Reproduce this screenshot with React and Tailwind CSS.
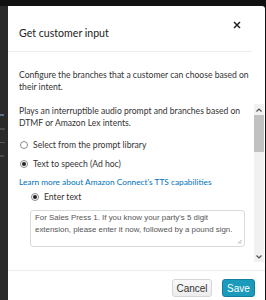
import React from 'react';

function Radio({ checked }) {
  return (
    <span className="w-[8px] h-[8px] rounded-full border border-[#8a8a8a] bg-white flex items-center justify-center shrink-0">
      {checked && <span className="w-[4px] h-[4px] rounded-full bg-[#222]" />}
    </span>
  );
}

export default function App() {
  const body = { fontFamily: 'Lato, "Open Sans", sans-serif' };
  const arial = { fontFamily: '"Liberation Sans", Arial, sans-serif' };

  return (
    <div className="w-[266px] h-[300px] bg-[#111] flex flex-col overflow-hidden">
      <div className="h-[6px] shrink-0" />
      <div className="flex flex-1 min-h-0">
        <div className="w-[8px] bg-[#2a2a2a] shrink-0 flex flex-col pt-[108px] gap-[12px]">
          <div className="h-[2px] w-[4px] bg-[#5a6f88]" />
          <div className="h-[2px] w-[5px] bg-[#4a4a4a]" />
          <div className="h-[1px] w-[5px] bg-[#555]" />
          <div className="h-[2px] w-[4px] bg-[#4a4a4a]" />
        </div>
        <div className="w-[257px] bg-white rounded-tr-[3px] flex flex-col text-[#16191f]" style={body}>
          <div className="h-[46px] flex items-start justify-between pl-[11px] pr-[11px] border-b border-[#eaeded] mr-[13px] shrink-0">
            <div className="text-[10.6px] mt-[20px] leading-[14px] text-[#222]">Get customer input</div>
            <svg className="mt-[15px]" width="8" height="8" viewBox="0 0 8 8">
              <path d="M1 1 L7 7 M7 1 L1 7" stroke="#222" strokeWidth="1.5" />
            </svg>
          </div>
          <div className="pl-[11px] pr-[14px] pt-[17px] text-[8.6px] leading-[12px] text-[#333] shrink-0">
            Configure the branches that a customer can choose based on their intent.
          </div>
          <div className="flex h-[158px] mt-[11px] shrink-0">
            <div className="flex-1 pl-[11px] pr-[9px] text-[8.6px] leading-[12px] text-[#333]">
              <div className="pt-[1px]">Plays an interruptible audio prompt and branches based on DTMF or Amazon Lex intents.</div>
              <div className="flex items-center gap-[5px] mt-[10px] pl-[1px]">
                <Radio />
                <span>Select from the prompt library</span>
              </div>
              <div className="flex items-center gap-[5px] mt-[7px] pl-[1px]">
                <Radio checked />
                <span>Text to speech (Ad hoc)</span>
              </div>
              <div className="mt-[6px] text-[#0073bb] text-[8.3px]">Learn more about Amazon Connect's TTS capabilities</div>
              <div className="flex items-center gap-[5px] mt-[3px] pl-[12px]">
                <Radio checked />
                <span>Enter text</span>
              </div>
              <div
                className="relative mt-[7px] ml-[11px] w-[215px] h-[37px] border border-[#d5dbdb] rounded-[3px] pl-[4px] pr-[2px] pt-[1px] text-[7.9px] leading-[12px] text-[#555]"
                style={arial}
              >
                For Sales Press 1. If you know your party's 5 digit extension, please enter it now, followed by a pound sign.
                <svg className="absolute right-[2px] bottom-[2px]" width="5" height="5" viewBox="0 0 5 5">
                  <path d="M4.5 1 L1 4.5 M4.5 3 L3 4.5" stroke="#999" strokeWidth="0.8" />
                </svg>
              </div>
            </div>
            <div className="w-[10px] mr-[1px] bg-[#f1f1f1] flex flex-col items-center shrink-0">
              <svg className="mt-[4px]" width="6" height="4" viewBox="0 0 6 4">
                <path d="M0.5 3.5 L3 1 L5.5 3.5" stroke="#505050" strokeWidth="1.2" fill="none" />
              </svg>
              <div className="w-[10px] h-[37px] bg-[#c1c1c1] mt-[3px]" />
              <div className="flex-1" />
              <svg className="mb-[3px]" width="6" height="4" viewBox="0 0 6 4">
                <path d="M0.5 0.5 L3 3 L5.5 0.5" stroke="#505050" strokeWidth="1.2" fill="none" />
              </svg>
            </div>
          </div>
          <div className="mt-[8px] h-[40px] border-t border-[#eaeded] flex items-start justify-end gap-[10px] pr-[10px] pt-[8px] shrink-0" style={arial}>
            <button className="h-[18px] w-[40px] rounded-[3px] border border-[#d5d5d5] bg-gradient-to-b from-[#fafafa] to-[#ececec] text-[10px] text-[#333]">
              Cancel
            </button>
            <button className="h-[18px] w-[33px] rounded-[3px] border border-[#127f9a] bg-[#1a9bbb] text-[10px] text-white">
              Save
            </button>
          </div>
        </div>
      </div>
    </div>
  );
}
